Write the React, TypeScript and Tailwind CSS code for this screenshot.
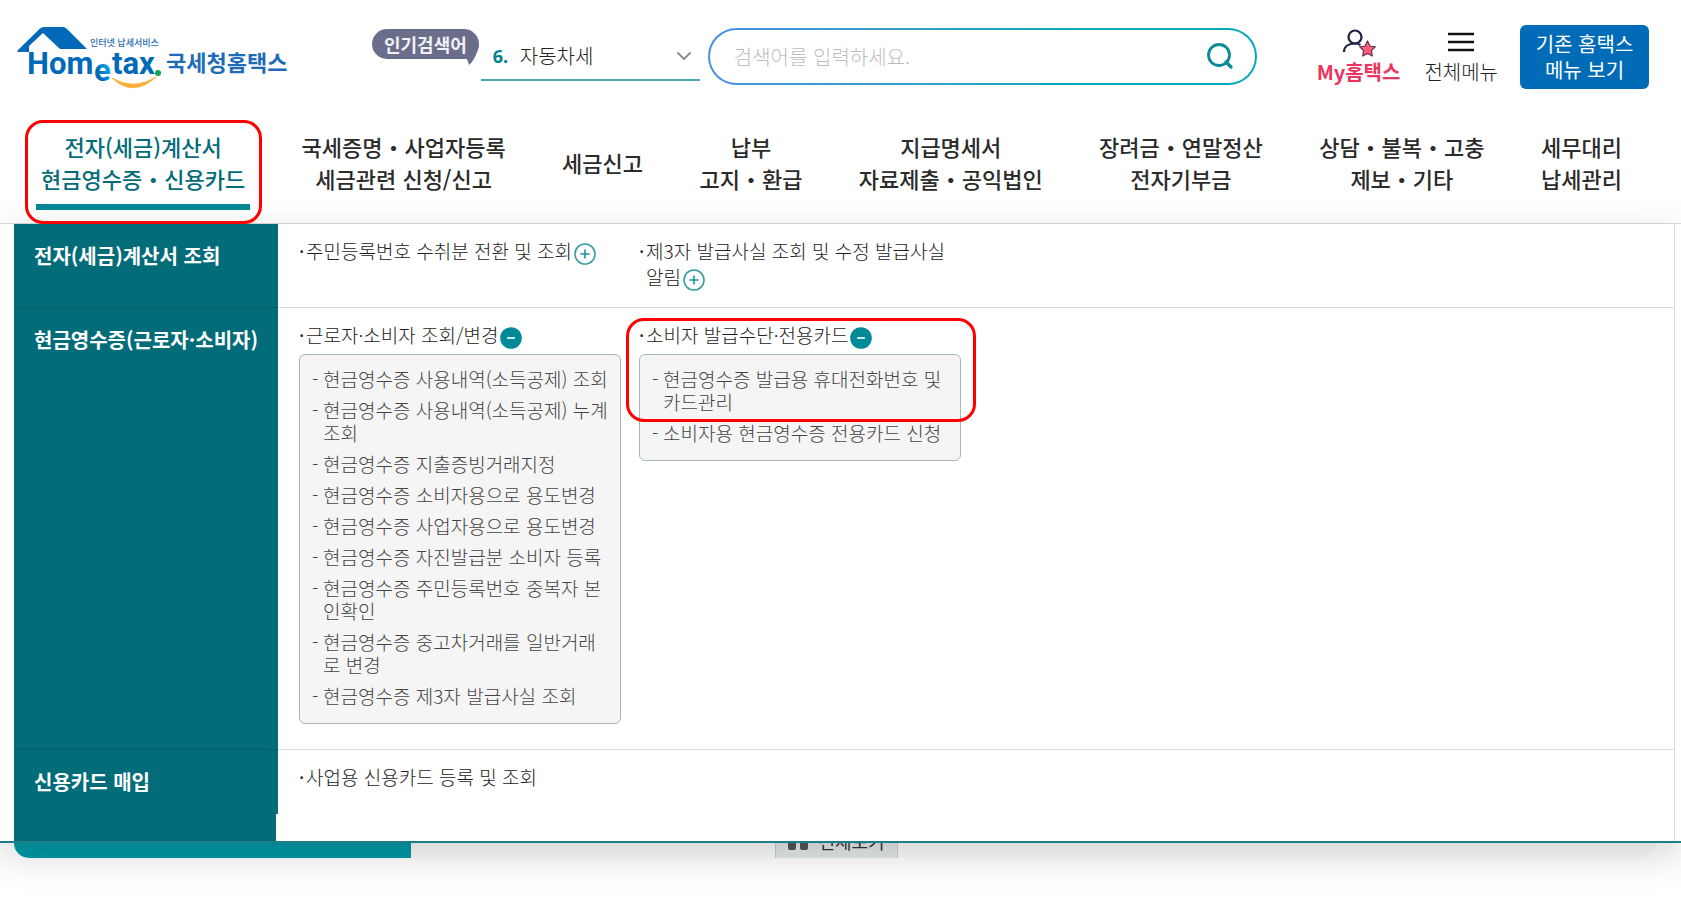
import { ChevronDown } from "lucide-react";

interface NavItem {
  lines: string[];
  active?: boolean;
}

interface SubMenu {
  title: string;
  state?: "open" | "closed";
  items?: string[];
  marked?: boolean;
}

interface MenuRow {
  heading: string;
  menus: SubMenu[];
}

const navItems: NavItem[] = [
  { lines: ["전자(세금)계산서", "현금영수증・신용카드"], active: true },
  { lines: ["국세증명・사업자등록", "세금관련 신청/신고"] },
  { lines: ["세금신고"] },
  { lines: ["납부", "고지・환급"] },
  { lines: ["지급명세서", "자료제출・공익법인"] },
  { lines: ["장려금・연말정산", "전자기부금"] },
  { lines: ["상담・불복・고충", "제보・기타"] },
  { lines: ["세무대리", "납세관리"] },
];

const menuRows: MenuRow[] = [
  {
    heading: "전자(세금)계산서 조회",
    menus: [
      { title: "주민등록번호 수취분 전환 및 조회", state: "closed" },
      { title: "제3자 발급사실 조회 및 수정 발급사실\n알림", state: "closed" },
    ],
  },
  {
    heading: "현금영수증(근로자·소비자)",
    menus: [
      {
        title: "근로자·소비자 조회/변경",
        state: "open",
        items: [
          "현금영수증 사용내역(소득공제) 조회",
          "현금영수증 사용내역(소득공제) 누계\n조회",
          "현금영수증 지출증빙거래지정",
          "현금영수증 소비자용으로 용도변경",
          "현금영수증 사업자용으로 용도변경",
          "현금영수증 자진발급분 소비자 등록",
          "현금영수증 주민등록번호 중복자 본\n인확인",
          "현금영수증 중고차거래를 일반거래\n로 변경",
          "현금영수증 제3자 발급사실 조회",
        ],
      },
      {
        title: "소비자 발급수단·전용카드",
        state: "open",
        marked: true,
        items: [
          "현금영수증 발급용 휴대전화번호 및\n카드관리",
          "소비자용 현금영수증 전용카드 신청",
        ],
      },
    ],
  },
  {
    heading: "신용카드 매입",
    menus: [{ title: "사업용 신용카드 등록 및 조회" }],
  },
];

function Logo() {
  return (
    <a href="#" aria-label="Hometax 국세청홈택스" className="shrink-0">
      <svg width="272" height="66" viewBox="0 0 272 66" className="block">
        <defs>
          <linearGradient id="logo-e" x1="0" y1="1" x2="1" y2="0">
            <stop offset="0.35" stopColor="#006ab8" />
            <stop offset="0.8" stopColor="#00b4ee" />
          </linearGradient>
        </defs>
        <path d="M0 27 L23 4.500 Q25 3 27 3 L46 3 Q48 3 50 5 L70 25 L43 25 L26 9 L12 22 L12 28 L1 28 Z" fill="#006ab8" />
        <text x="10" y="50" fontSize="31" fontWeight="700" fill="#006ab8" fontFamily="Roboto, sans-serif">Hom</text>
        <text x="77" y="57" fontSize="31" fontWeight="700" fill="url(#logo-e)" fontFamily="Roboto, sans-serif">e</text>
        <text x="95" y="50" fontSize="31" fontWeight="700" fill="#006ab8" fontFamily="Roboto, sans-serif">tax</text>
        <circle cx="141" cy="49" r="3" fill="#12a84b" />
        <path d="M95 54 Q116 74 139 53 Q117 67 95 54 Z" fill="#f9ad34" stroke="#f9ad34" strokeWidth="0.800" />
        <text x="73" y="22" fontSize="9" fontWeight="500" fill="#1f6db5" fontFamily="'Noto Sans CJK KR', sans-serif">인터넷 납세서비스</text>
        <text x="149" y="47" fontSize="22" fontWeight="700" fill="#1d6cb8" fontFamily="'Noto Sans CJK KR', sans-serif">국세청홈택스</text>
      </svg>
    </a>
  );
}

function MyIcon() {
  return (
    <svg width="34" height="30" viewBox="0 -1 34 30" fill="none">
      <circle cx="13" cy="8" r="6.500" stroke="#1b2140" strokeWidth="2.200" />
      <path d="M2 23 C2 18 6 14.500 13 14.500 C15 14.500 17 15 18.500 16" stroke="#1b2140" strokeWidth="2.200" />
      <path
        d="M25.500 12 L28 17 L33.300 17.800 L29.400 21.600 L30.300 27 L25.500 24.500 L20.700 27 L21.600 21.600 L17.700 17.800 L23 17 Z"
        fill="#ff5c7c"
        stroke="#5c3350"
        strokeWidth="1.200"
        strokeLinejoin="round"
      />
    </svg>
  );
}

function SearchIcon() {
  return (
    <svg width="28" height="28" viewBox="0 0 28 28" fill="none">
      <circle cx="12" cy="12" r="10.500" stroke="#0b8b98" strokeWidth="2.800" />
      <path d="M19 19 L24 24" stroke="#0b8b98" strokeWidth="3.200" strokeLinecap="round" />
    </svg>
  );
}

function ToggleIcon({ open }: { open: boolean }) {
  return (
    <svg width="22" height="22" viewBox="0 0 22 22" fill="none">
      <circle cx="11" cy="11" r="10" fill={open ? "#008a97" : "#fff"} stroke={open ? "#008a97" : "#3d9ba5"} strokeWidth="1.600" />
      <path d={open ? "M7 11 H15" : "M6.500 11 H15.500 M11 6.500 V15.500"} stroke={open ? "#fff" : "#1c909b"} strokeWidth="1.600" />
    </svg>
  );
}

function Header() {
  return (
    <header className="flex h-[113px] items-center pr-8 pl-[17px]">
      <Logo />

      {/* Popular keyword */}
      <div className="relative mt-[29px] ml-[83px] shrink-0 self-start rounded-full bg-[#6b6e8a] px-3 text-lg leading-[30px] font-bold text-[#f1f2f8]">
        <label htmlFor="keyword">인기검색어</label>
        <svg width="17" height="22" viewBox="0 0 17 22" className="absolute right-0 -bottom-1.5">
          <path d="M0 15 L5 16 L7 22 Q14 16 17 2 Z" fill="#6b6e8a" />
        </svg>
      </div>
      <div className="relative mr-2 ml-0.5 flex h-12 w-[219px] shrink-0 items-center border-b-2 border-[#4aa9b0] pl-3">
        <span className="w-[27px] font-['Noto_Sans'] text-lg font-bold text-[#00828f]">6.</span>
        <select id="keyword" className="h-full flex-1 appearance-none bg-transparent text-xl font-light text-[#222]">
          <option>자동차세</option>
        </select>
        <ChevronDown size={24} strokeWidth={1.800} className="pointer-events-none absolute right-1 text-[#8a8a8a]" />
      </div>

      {/* Search */}
      <form className="h-[57px] flex-1 rounded-full bg-linear-to-r from-[#4a90e2] to-[#06a9b8] to-65% p-0.5">
        <div className="flex h-full items-center rounded-full bg-white pr-5 pl-6">
          <input
            type="search"
            aria-label="검색어"
            placeholder="검색어를 입력하세요."
            className="min-w-0 flex-1 bg-transparent text-xl font-light text-[#333] outline-none placeholder:text-[#bdbdbd]"
          />
          <button type="button" aria-label="검색">
            <SearchIcon />
          </button>
        </div>
      </form>

      {/* Shortcuts */}
      <div className="ml-[60px] flex shrink-0 items-center">
        <a href="#" className="flex flex-col items-center text-xl leading-7 font-bold text-[#ea3560]">
          <MyIcon />
          My홈택스
        </a>
        <button type="button" className="ml-6 flex flex-col items-center text-xl leading-7 font-light text-[#222]">
          <svg width="26" height="30" viewBox="0 -1 26 30">
            <path d="M0 5 H26 M0 13 H26 M0 21 H26" stroke="#111" strokeWidth="2.400" />
          </svg>
          전체메뉴
        </button>
        <a href="#" className="ml-[22px] flex h-16 w-[129px] items-center justify-center rounded-md bg-[#006cb8] text-center text-xl leading-[26px] text-white">
          기존 홈택스
          <br />
          메뉴 보기
        </a>
      </div>
    </header>
  );
}

function MainNav() {
  return (
    <nav className="border-b border-[#dcdcdc] pb-[13px]">
      <ul className="flex items-stretch justify-between pr-[54px] pl-9">
        {navItems.map((item) => (
          <li key={item.lines[0]} className="relative flex">
            <a
              href="#"
              className={
                "flex flex-col justify-center border-b-6 px-[5px] pt-[17px] pb-2.5 text-center text-[22px] leading-8 font-medium " +
                (item.active ? "border-[#008997] text-[#046c79]" : "border-transparent text-[#2b2b2b]")
              }
            >
              {item.lines.map((line) => (
                <span key={line} className="whitespace-nowrap">
                  {line}
                </span>
              ))}
            </a>
            {item.active && (
              <span className="pointer-events-none absolute top-[7px] -right-3 -bottom-[14px] -left-[11px] z-20 rounded-[18px] border-3 border-[#fe0000]" />
            )}
          </li>
        ))}
      </ul>
    </nav>
  );
}

function MenuColumn({ menu }: { menu: SubMenu }) {
  return (
    <div className="relative w-[322px]">
      <div className="flex text-[19px] leading-[26px] font-light text-[#222]">
        <span className="w-[7px] shrink-0 font-normal">·</span>
        <div>
          <a href="#" className="whitespace-pre">
            {menu.title}
          </a>
          {menu.state && (
            <button type="button" aria-label={menu.state === "open" ? "접기" : "펼치기"} className="ml-0.5 inline-flex h-[22px] align-[-6px]">
              <ToggleIcon open={menu.state === "open"} />
            </button>
          )}
        </div>
      </div>
      {menu.items && (
        <ul className="mt-[5px] space-y-2 rounded-md border border-[#a5b8b9] bg-[#f5f5f5] pt-3 pr-2 pb-4 pl-3 text-[19px] leading-[23px] font-light text-[#444]">
          {menu.items.map((item) => (
            <li key={item} className="flex">
              <span className="w-[11px] shrink-0">-</span>
              <a href="#" className="whitespace-pre">
                {item}
              </a>
            </li>
          ))}
        </ul>
      )}
      {menu.marked && (
        <span className="pointer-events-none absolute -top-1 -right-[15px] -left-[13px] h-[104px] rounded-[18px] border-3 border-[#fe0000]" />
      )}
    </div>
  );
}

function MegaMenu() {
  return (
    <section className="relative z-10 border-b-2 border-[#1e7d89] bg-white pr-[6px] pl-[14px] shadow-[0_12px_36px_rgba(0,0,0,0.17)]">
      <div className="border-r border-[#dcdcdc]">
        {menuRows.map((row, index) => {
          const last = index === menuRows.length - 1;
          return (
            <div key={row.heading} className="flex">
              <h2
                className={
                  "w-[264px] shrink-0 bg-[#036c79] pt-[18px] pl-5 text-xl leading-7 font-bold text-white " +
                  (last ? "" : "border-b border-[#075c68]")
                }
              >
                {row.heading}
              </h2>
              <div
                className={
                  "flex flex-1 items-start gap-[18px] pt-[14px] pl-[21px] " +
                  (last ? "pb-6" : row.menus[0].items ? "border-b border-[#dcdcdc] pb-[25px]" : "border-b border-[#dcdcdc] pb-4")
                }
              >
                {row.menus.map((menu) => (
                  <MenuColumn key={menu.title} menu={menu} />
                ))}
              </div>
            </div>
          );
        })}
        <div className="h-[27px] w-[262px] bg-[#036c79]" />
      </div>
    </section>
  );
}

function PageBottom() {
  return (
    <div className="mr-[26px] ml-[14px] flex h-[15px] overflow-hidden rounded-b-[18px] bg-[#fcfcfc]">
      <div className="w-[397px] shrink-0 bg-[#009aa7]" />
      <div className="flex flex-1 pl-[364px]">
        <button type="button" className="flex w-[123px] items-end justify-center gap-2.5 border-x border-[#c3d3d3] bg-[#e3eaea] pb-2 text-lg leading-[18px] text-[#333]">
          <span className="flex gap-1">
            <span className="size-2 rounded-xs bg-[#555]" />
            <span className="size-2 rounded-xs bg-[#555]" />
          </span>
          전체보기
        </button>
      </div>
    </div>
  );
}

export default function App() {
  return (
    <div lang="ko" className="min-h-screen bg-white font-['Noto_Sans_CJK_KR',sans-serif]">
      <Header />
      <MainNav />
      <MegaMenu />
      <PageBottom />
    </div>
  );
}
